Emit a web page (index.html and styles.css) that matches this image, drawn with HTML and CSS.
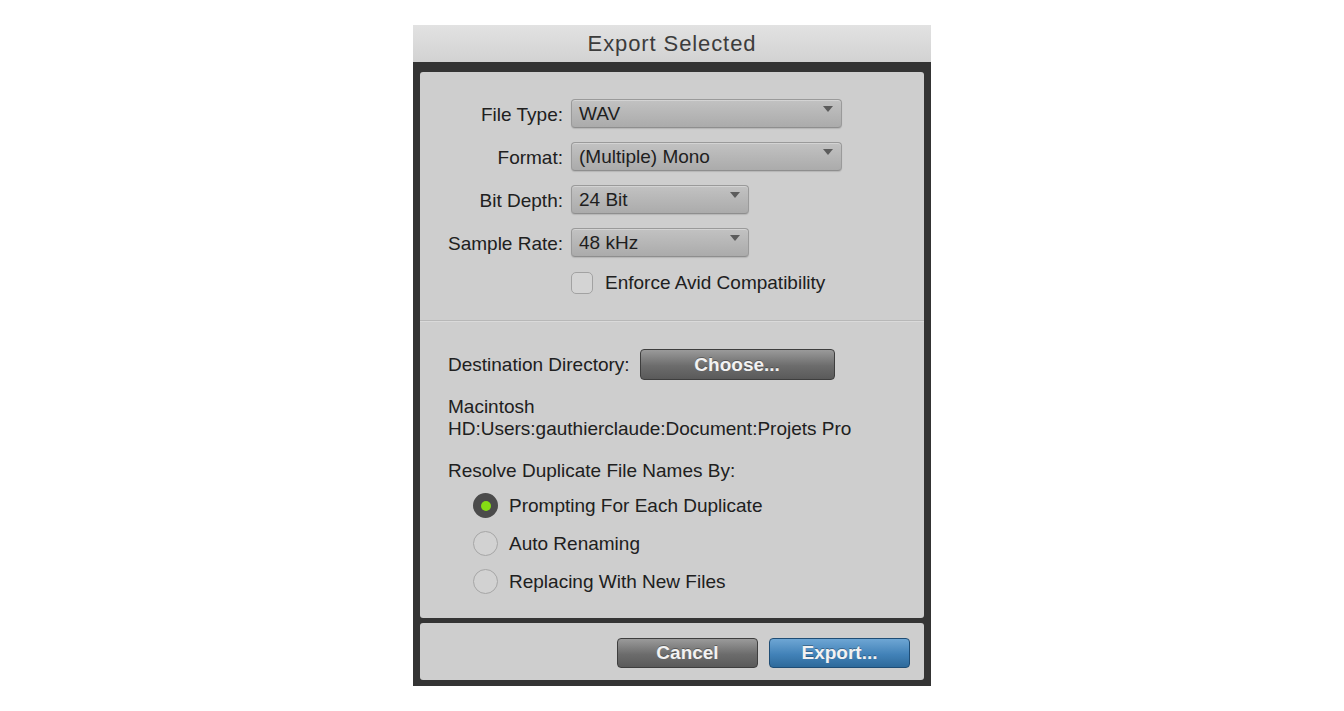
FILE: index.html
```html
<!DOCTYPE html>
<html lang="en">

<head>
    <meta charset="UTF-8">
    <meta name="viewport" content="width=device-width, initial-scale=1.0">
    <title>Export Selected</title>
    <link rel="stylesheet" href="styles.css">
</head>

<body>

    <div class="dialog">
        <div class="title-bar">Export Selected</div>

        <div class="dialog-body">
            <div class="panel main-panel">

                <!-- File settings -->
                <div class="settings">
                    <div class="field-grid">
                        <label class="field-label">File Type:</label>
                        <div class="popup popup-wide">WAV</div>

                        <label class="field-label">Format:</label>
                        <div class="popup popup-wide">(Multiple) Mono</div>

                        <label class="field-label">Bit Depth:</label>
                        <div class="popup popup-short">24 Bit</div>

                        <label class="field-label">Sample Rate:</label>
                        <div class="popup popup-short">48 kHz</div>

                        <span></span>
                        <label class="check-row">
                            <span class="checkbox"></span>
                            Enforce Avid Compatibility
                        </label>
                    </div>
                </div>

                <div class="divider"></div>

                <!-- Destination -->
                <div class="destination">
                    <div class="dest-row">
                        <span>Destination Directory:</span>
                        <button class="btn btn-dark btn-choose">Choose...</button>
                    </div>

                    <p class="dest-path">Macintosh<br>HD:Users:gauthierclaude:Document:Projets Pro</p>

                    <p class="resolve-title">Resolve Duplicate File Names By:</p>

                    <div class="radio-list">
                        <label class="radio-row">
                            <span class="radio checked"></span>
                            Prompting For Each Duplicate
                        </label>
                        <label class="radio-row">
                            <span class="radio"></span>
                            Auto Renaming
                        </label>
                        <label class="radio-row">
                            <span class="radio"></span>
                            Replacing With New Files
                        </label>
                    </div>
                </div>
            </div>

            <div class="panel button-panel">
                <button class="btn btn-dark">Cancel</button>
                <button class="btn btn-blue">Export...</button>
            </div>
        </div>
    </div>

</body>

</html>
```

FILE: styles.css
```css
body {
    font-family: "Liberation Sans", Arial, sans-serif;
    margin: 0;
    background-color: #fff;
    color: #202020;
    display: flex;
    justify-content: center;
    padding-top: 25px;
}

/* Dialog frame */
.dialog {
    width: 518px;
    background-color: #343434;
}

.title-bar {
    height: 37px;
    line-height: 38px;
    text-align: center;
    font-size: 22px;
    letter-spacing: 0.9px;
    color: #3c3c3c;
    background: linear-gradient(#e2e2e2, #d2d2d2);
}

.dialog-body {
    padding: 10px 7px 6px 7px;
    display: flex;
    flex-direction: column;
    gap: 5px;
}

.panel {
    background-color: #cecece;
    border-radius: 3px;
}

/* Top section - file settings */
.settings {
    padding: 27px 28px 26px 28px;
}

.field-grid {
    display: grid;
    grid-template-columns: 115px 1fr;
    column-gap: 8px;
    row-gap: 14px;
    align-items: center;
    font-size: 19px;
}

.field-label {
    text-align: right;
    white-space: nowrap;
    line-height: 22px;
    padding-top: 2px;
}

.popup {
    height: 29px;
    box-sizing: border-box;
    display: flex;
    align-items: center;
    padding: 1px 0 0 7px;
    border: 1px solid #9a9a9a;
    border-bottom-color: #8e8e8e;
    border-radius: 4px;
    background: linear-gradient(#c2c2c2, #ababab);
    box-shadow: inset 0 1px 0 rgba(255, 255, 255, 0.3), 0 1px 1px rgba(0, 0, 0, 0.12);
    color: #1e1e1e;
}

.popup::after {
    content: "";
    margin-left: auto;
    margin-right: 8px;
    align-self: flex-start;
    margin-top: 5px;
    border-left: 5px solid transparent;
    border-right: 5px solid transparent;
    border-top: 6px solid #5c5c5c;
}

.popup-wide {
    width: 271px;
}

.popup-short {
    width: 178px;
}

.check-row {
    display: flex;
    align-items: center;
    gap: 12px;
    margin-top: 1px;
    line-height: 22px;
}

.checkbox {
    width: 22px;
    height: 22px;
    box-sizing: border-box;
    border: 1px solid #a2a2a2;
    border-radius: 5px;
    background-color: #d4d4d4;
}

.divider {
    height: 0;
    border-top: 1px solid #b8b8b8;
    border-bottom: 1px solid #dadada;
}

/* Destination section */
.destination {
    padding: 27px 28px 24px 28px;
    font-size: 19px;
}

.dest-row {
    display: flex;
    align-items: center;
    gap: 10px;
}

.dest-path {
    margin: 16px 0 0 0;
    line-height: 22px;
}

.resolve-title {
    margin: 20px 0 0 0;
    line-height: 22px;
}

.radio-list {
    display: flex;
    flex-direction: column;
    gap: 13px;
    margin-top: 11px;
    padding-left: 25px;
}

.radio-row {
    display: flex;
    align-items: center;
    gap: 11px;
    height: 25px;
}

.radio {
    flex-shrink: 0;
    width: 25px;
    height: 25px;
    box-sizing: border-box;
    border-radius: 50%;
    border: 1px solid #a6a6a6;
    background-color: #d2d2d2;
    display: flex;
    justify-content: center;
    align-items: center;
}

.radio.checked {
    border: 7px solid #4b4b4b;
    background-color: #4b4b4b;
}

.radio.checked::after {
    content: "";
    flex-shrink: 0;
    width: 10px;
    height: 10px;
    border-radius: 50%;
    background-color: #86dc14;
}

/* Buttons */
.btn {
    font-family: "Liberation Sans", Arial, sans-serif;
    font-size: 19px;
    font-weight: bold;
    color: #f2f2f2;
    height: 30px;
    padding: 0;
    border-radius: 4px;
    cursor: pointer;
    text-shadow: 0 -1px 0 rgba(0, 0, 0, 0.3);
}

.btn-dark {
    border: 1px solid #3e3e3e;
    background: linear-gradient(#9a9a9a, #6c6c6c 55%, #5a5a5a);
}

.btn-blue {
    border: 1px solid #1f4d75;
    background: linear-gradient(#6ea6d4, #4282b8 55%, #2e6a9b);
}

.btn-choose {
    width: 195px;
    height: 31px;
}

.button-panel {
    display: flex;
    justify-content: flex-end;
    gap: 11px;
    padding: 15px 14px 12px 14px;
}

.button-panel .btn {
    width: 141px;
}
```
